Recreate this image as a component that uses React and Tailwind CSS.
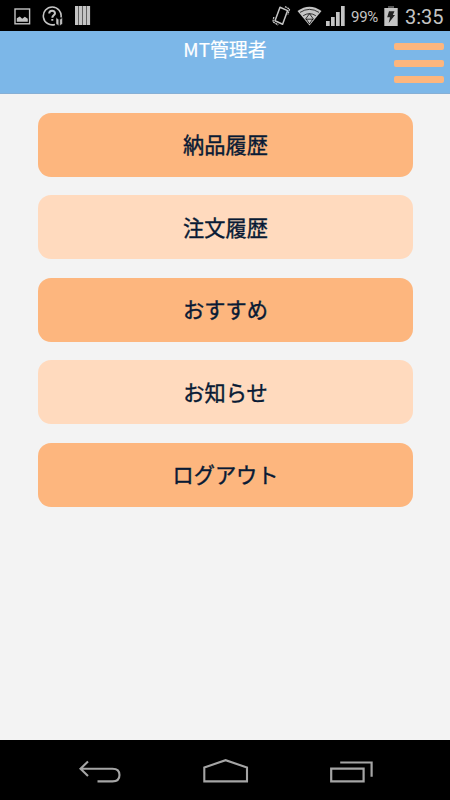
const MENU = ['納品履歴', '注文履歴', 'おすすめ', 'お知らせ', 'ログアウト'];

function StatusBar() {
  return (
    <div className="flex h-[31px] shrink-0 items-center bg-black text-[#c4c4c4]">
      <svg className="ml-[14px] mt-px h-[17px] w-[17px] shrink-0" viewBox="0 0 17 17" fill="none">
        <rect x="1" y="1" width="14.6" height="14.8" stroke="currentColor" strokeWidth="1.4" />
        <path d="M2.8 13.8V10.2L5.8 8.4L8.2 10.8L10.8 8.8L13.8 10.8V13.8Z" fill="currentColor" />
      </svg>
      <svg className="ml-[11px] h-[22px] w-[22px] shrink-0" viewBox="0 0 22 22" fill="none" stroke="currentColor">
        <path d="M13 19.4A8.9 8.9 0 1 1 19 12.5" strokeWidth="1.6" />
        <path d="M7.2 8.6C7.2 4.8 13 5 13 8.2C13 10.2 10.3 10.3 10.3 12.7M10.3 14V15.8" strokeWidth="2" />
        <path d="M14 12.6L16.8 14.6V20.8L14 19ZM20.4 12.6L17.7 14.6V20.8L20.4 19Z" fill="currentColor" stroke="#000" strokeWidth="0.5" />
      </svg>
      <svg className="ml-[11px] h-[19px] w-4 shrink-0" viewBox="0 0 16 19" fill="currentColor">
        <path d="M0 0H3.4V19H0ZM3.9 0H7.3V19H3.9ZM7.8 0H11.2V19H7.8ZM11.7 0H15.1V19H11.7Z" />
      </svg>
      <svg className="ml-auto h-[22px] w-[19px] shrink-0" viewBox="0 0 19 22" fill="none" stroke="currentColor">
        <path d="M8 2.2L15.6 5.6L10.6 19.2L3 15.8Z" strokeWidth="1.5" strokeLinejoin="round" />
        <path d="M13 1.6L17.6 4L15.8 9.5M1.8 12L0.9 16.8L6.2 20" strokeWidth="1.3" strokeDasharray="2 0.6" />
      </svg>
      <svg className="ml-[6px] h-5 w-[25px] shrink-0" viewBox="0 0 25 20">
        <path d="M0.5 5Q12.5 -3.6 24.5 5L12.5 19.5Z" fill="currentColor" />
        <path d="M3 6.4Q12.5 0.3 22 6.4M6.2 9.7Q12.5 5.6 18.8 9.7M8.6 13.2H16.4M12.5 7.7L8.9 12.6L12.5 18M12.5 7.7L16.1 12.6L12.5 18" fill="none" stroke="#000" strokeWidth="0.75" />
      </svg>
      <svg className="ml-[4px] h-5 w-[19px] shrink-0" viewBox="0 0 19 20" fill="currentColor">
        <path d="M0 15H3.7V20H0ZM5 11H8.7V20H5ZM10 6H13.7V20H10ZM15 0H18.7V20H15Z" />
      </svg>
      <span className="ml-[6px] w-[28px] whitespace-nowrap pt-[2px] font-[Roboto,sans-serif] text-[15px] leading-5 tracking-[-0.3px]">99%</span>
      <svg className="ml-[5px] h-[20px] w-[14px] shrink-0" viewBox="0 0 14 20">
        <path d="M0.3 2H13.7V20H0.3Z" fill="currentColor" />
        <path d="M4 0H10V2H4Z" fill="#555" />
        <path d="M5 5.2H10.5L8.8 9H11L4.7 17L6 11.3H3.2Z" fill="#222" />
      </svg>
      <span className="ml-[7px] mr-[7px] w-[38px] whitespace-nowrap pt-[2px] font-[Roboto,sans-serif] text-[20px] leading-6">3:35</span>
    </div>
  );
}

function Header() {
  return (
    <header className="grid h-[63px] shrink-0 grid-cols-[1fr_auto_1fr] border-b border-[#86afd5] bg-[#7cb7e8]">
      <h1 className="col-start-2 pt-[4px] text-[18.9px] leading-[28px] text-white [-webkit-text-stroke:0.2px_white]">MT管理者</h1>
      <button aria-label="menu" className="mr-[6px] mt-[12px] flex flex-col gap-[9.5px] justify-self-end">
        <span className="h-[7px] w-[50px] rounded-[2px] bg-[#fdb67e]" />
        <span className="h-[7px] w-[50px] rounded-[2px] bg-[#fdb67e]" />
        <span className="h-[7px] w-[50px] rounded-[2px] bg-[#fdb67e]" />
      </button>
    </header>
  );
}

function NavigationBar() {
  return (
    <nav className="flex h-[60px] shrink-0 items-center justify-between bg-black pl-[78px] pr-[76px] pt-1 text-[#a5a5a5]">
      <svg className="h-7 w-11" viewBox="0 0 44 28" fill="none" stroke="currentColor" strokeWidth="2.1">
        <path d="M10 3.5L2.5 10.7L10 18M2.5 10.7H34.5Q41.5 10.7 41.5 17Q41.5 23.4 34.5 23.4H19.5" />
      </svg>
      <svg className="h-7 w-[46px]" viewBox="1 0 46 28" fill="none" stroke="currentColor" strokeWidth="2.1">
        <path d="M2.3 23.4V9.5L23.6 2.2L45 9.5V23.4Z" />
      </svg>
      <svg className="h-7 w-11" viewBox="0 0 44 28" fill="none" stroke="currentColor" strokeWidth="2.2">
        <path d="M1.2 10.7H33.6V23.4H1.2ZM10.2 4.5H41.6V18.8" />
      </svg>
    </nav>
  );
}

export default function App() {
  return (
    <div className="flex h-screen flex-col overflow-hidden bg-[#f3f3f3] font-['Noto_Sans_CJK_JP',sans-serif]">
      <StatusBar />
      <Header />
      <main className="flex flex-1 flex-col gap-[18.5px] px-[37.5px] pt-[18.6px]">
        {MENU.map((label, index) => (
          <button
            key={label}
            className={`flex h-16 shrink-0 items-center justify-center rounded-[13px] pb-px pl-px text-[21.2px] font-normal text-[#081a35] [-webkit-text-stroke:0.4px_#081a35] ${index % 2 === 0 ? 'bg-[#fdb67e]' : 'bg-[#ffdabe]'}`}
          >
            {label}
          </button>
        ))}
      </main>
      <NavigationBar />
    </div>
  );
}
